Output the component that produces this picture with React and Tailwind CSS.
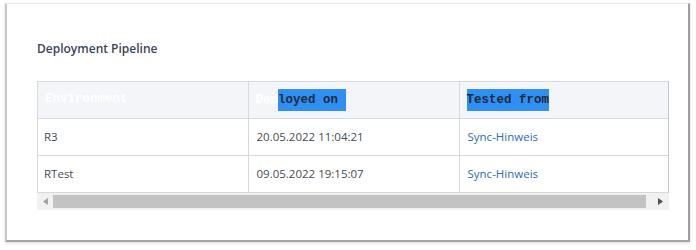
const ROWS = [
  { env: 'R3', deployed: '20.05.2022 11:04:21', tested: 'Sync-Hinweis' },
  { env: 'RTest', deployed: '09.05.2022 19:15:07', tested: 'Sync-Hinweis' },
];

export default function App() {
  return (
    <div className="w-[696px] h-[250px] bg-white pt-[3px] pl-[5px]" style={{ fontFamily: '"Open Sans", "Noto Sans", sans-serif' }}>
      {/* Card */}
      <div className="w-[685px] h-[239px] bg-white border-t border-t-[#ececec] border-l-2 border-l-[#c9c9c9] border-r-2 border-r-[#9d9d9d] border-b-2 border-b-[#a5a5a5] shadow-[0_1px_3px_rgba(0,0,0,0.15)] pl-[30px] pt-[36px]">
        <h2 className="text-[12px] leading-[18px] font-semibold text-[#3b4658] mb-[23px]">
          Deployment Pipeline
        </h2>

        {/* Scrollable table */}
        <div className="w-[632px]">
          <div className="overflow-hidden border-l border-t border-[#d6dae0] border-r border-r-[#c4c8ce]">
            <table className="border-collapse table-fixed w-[700px]">
              <colgroup>
                <col className="w-[210px]" />
                <col className="w-[211px]" />
                <col className="w-[279px]" />
              </colgroup>
              <thead>
                <tr className="h-[36px] bg-[#f3f5f8]" style={{ fontFamily: '"Liberation Mono", "Courier New", monospace' }}>
                  <th className="border-r border-b border-[#d6dae0] px-[7px] text-left text-[12.5px] font-bold text-white">
                    Environment
                  </th>
                  <th className="border-r border-b border-[#d6dae0] px-[7px] text-left text-[12.5px] font-bold text-white">
                    Dep<span className="bg-[#2f8ff2] text-[#1d2a3f] inline-block leading-[22px] pr-[8px]">loyed on</span>
                  </th>
                  <th className="border-b border-[#d6dae0] px-[7px] text-left text-[12.5px] font-bold">
                    <span className="bg-[#2f8ff2] text-[#1d2a3f] inline-block leading-[22px]">Tested from</span>
                  </th>
                </tr>
              </thead>
              <tbody>
                {ROWS.map((row) => (
                  <tr key={row.env} className="h-[37px] text-[11.5px] text-[#464c55]">
                    <td className="border-r border-b border-[#d6dae0] px-[6px]">{row.env}</td>
                    <td className="border-r border-b border-[#d6dae0] px-[8px]">{row.deployed}</td>
                    <td className="border-b border-[#d6dae0] px-[8px] text-[#2f6cbf]">{row.tested}</td>
                  </tr>
                ))}
              </tbody>
            </table>
          </div>

          {/* Horizontal scrollbar */}
          <div className="flex items-center h-[17px] bg-[#f1f1f1]">
            <div className="w-[16px] flex items-center justify-center">
              <svg width="5" height="7" viewBox="0 0 5 7"><path d="M5 0 L0 3.5 L5 7 Z" fill="#a3a3a3" /></svg>
            </div>
            <div className="w-[593px] h-[13px] bg-[#c3c3c3]" />
            <div className="flex-1 flex items-center justify-end pr-[6px]">
              <svg width="5" height="7" viewBox="0 0 5 7"><path d="M0 0 L5 3.5 L0 7 Z" fill="#505050" /></svg>
            </div>
          </div>
        </div>
      </div>
    </div>
  );
}
